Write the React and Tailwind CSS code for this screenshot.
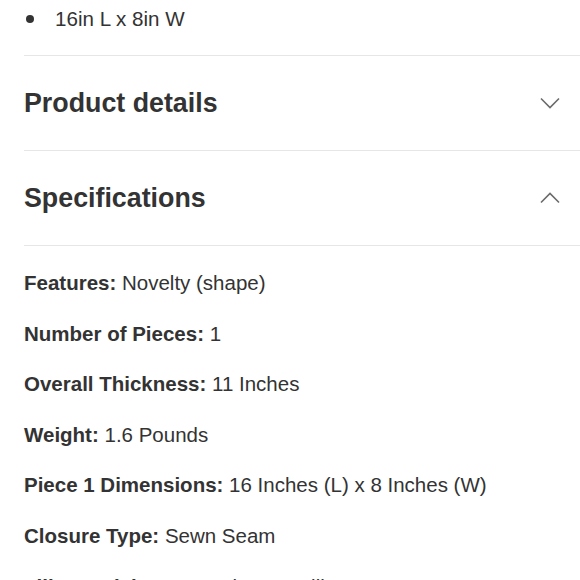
import React from 'react'

const specs = [
  ['Features:', 'Novelty (shape)'],
  ['Number of Pieces:', '1'],
  ['Overall Thickness:', '11 Inches'],
  ['Weight:', '1.6 Pounds'],
  ['Piece 1 Dimensions:', '16 Inches (L) x 8 Inches (W)'],
  ['Closure Type:', 'Sewn Seam'],
  ['Fill Material:', '100% Polyester Fill'],
]

const Chevron = ({ up }) => (
  <svg width="20" height="12" viewBox="0 0 20 12" fill="none" className="text-[#6b6b6b]">
    <path
      d={up ? 'M1 10.5L10 1.5L19 10.5' : 'M1 1.5L10 10.5L19 1.5'}
      stroke="currentColor"
      strokeWidth="1.6"
    />
  </svg>
)

const Section = ({ title, up }) => (
  <div className="h-[95px] flex items-center justify-between pr-[20px] border-b border-[#e6e6e6]">
    <h2 className="text-[26.8px] font-bold text-[#333]">{title}</h2>
    <Chevron up={up} />
  </div>
)

export default function App() {
  return (
    <div
      className="w-[580px] h-[580px] overflow-hidden bg-white text-[#333] pl-[24px]"
      style={{ fontFamily: '"Liberation Sans", Arial, sans-serif' }}
    >
      <div className="h-[56px] pt-[5px] border-b border-[#e6e6e6]">
        <div className="flex items-center leading-[28px] text-[20.6px]">
          <span className="w-[8px] h-[8px] rounded-full bg-[#333] ml-[2px] mr-[21px]" />
          <span className="text-[#333]">16in L x 8in W</span>
        </div>
      </div>
      <Section title="Product details" />
      <Section title="Specifications" up />
      <div className="pt-[23px]">
        {specs.map(([k, v]) => (
          <p key={k} className="text-[20.5px] leading-[28px] mb-[22.6px]">
            <span className="font-bold">{k}</span> {v}
          </p>
        ))}
      </div>
    </div>
  )
}
